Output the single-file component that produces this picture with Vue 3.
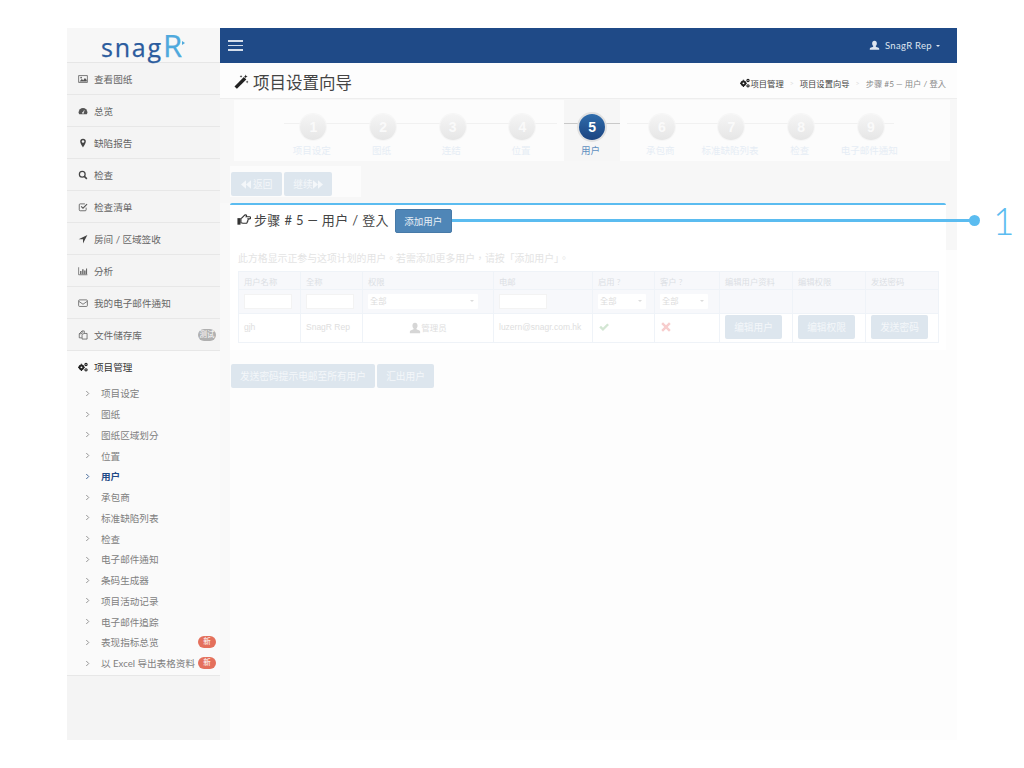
<template>
  <div class="frame">
    <aside class="sidebar">
      <div class="logo">snag<span class="logo-r">R</span><i class="logo-dot"></i></div>
      <a v-for="item in menu" :key="item.label" class="menu-item">
        <svg class="menu-icon" viewBox="0 0 16 16" v-html="item.icon"></svg>
        <span>{{ item.label }}</span>
        <em v-if="item.badge" class="badge grey">{{ item.badge }}</em>
      </a>
      <div class="menu-open">
        <div class="menu-head">
          <svg class="menu-icon" viewBox="0 0 16 16" v-html="cogs"></svg>
          <span>项目管理</span>
        </div>
        <a
          v-for="sub in submenu"
          :key="sub.label"
          class="sub-item"
          :class="{ active: sub.active }"
        >
          <svg class="chevron" viewBox="0 0 6 8"><path d="M1.5 1l3 3-3 3" fill="none" stroke="currentColor" stroke-width="1" /></svg>
          <span class="sub-label">{{ sub.label }}</span>
          <em v-if="sub.isNew" class="badge red">新</em>
        </a>
      </div>
    </aside>

    <main class="main">
      <header class="topbar">
        <div class="burger"><i></i><i></i><i></i></div>
        <div class="user">
          <svg class="user-icon" viewBox="0 0 14 14"><path d="M7 1c1.9 0 3 1.4 3 3.3 0 1.300-.6 2.500-1.300 3.100v1.100c1.700.6 4.300 1.300 4.300 2.600V12.500H1v-1.400c0-1.300 2.600-2 4.300-2.600V7.400C4.600 6.800 4 5.600 4 4.300 4 2.400 5.100 1 7 1z" fill="#dfe6f0" /></svg>
          <span>SnagR Rep</span>
          <i class="caret"></i>
        </div>
      </header>

      <div class="titlebar">
        <h1>
          <svg class="wand" viewBox="0 0 16 16"><path d="M.5 13.200L10.500 3.200l2.600 2.600L3.100 15.800z" fill="#222" /><path d="M12.500 .5l.6 1.500 1.500.6-1.500.6-.6 1.500-.6-1.500-1.500-.6 1.500-.6zM7.500 1l.4 1.100 1.100.4-1.100.4-.4 1.100-.4-1.100-1.100-.4 1.100-.4zM14 7l.4 1.100 1.100.4-1.100.4-.4 1.100-.4-1.100-1.100-.4 1.100-.4z" fill="#222" /></svg>
          项目设置向导
        </h1>
        <div class="crumbs">
          <svg class="crumb-icon" viewBox="0 0 16 16" v-html="cogs"></svg>
          <b>项目管理</b><u>&gt;</u><b>项目设置向导</b><u>&gt;</u><span>步骤 #5 — 用户 / 登入</span>
        </div>
      </div>

      <div class="steps-wrap">
        <div class="steps">
          <div
            v-for="(step, i) in steps"
            :key="step"
            class="step"
            :class="{ current: i === 4 }"
          >
            <div class="circle">{{ i + 1 }}</div>
            <div class="step-label">{{ step }}</div>
          </div>
        </div>
      </div>

      <div class="nav-row">
        <div class="nav-buttons">
          <button class="btn faded back">
            <svg class="arrows" viewBox="0 0 12 10"><path d="M6 0v10L0 5zM12 0v10L6 5z" fill="currentColor" /></svg>
            返回
          </button>
          <button class="btn faded next">
            继续<svg class="arrows" viewBox="0 0 12 10"><path d="M0 0v10l6-5zM6 0v10l6-5z" fill="currentColor" /></svg>
          </button>
        </div>
      </div>

      <section class="card">
        <div class="card-head">
          <h2>
            <svg class="thumb" viewBox="0 0 16 16"><path d="M.5 7h3.500v7.500H.5z" fill="#333" /><path d="M4.500 7.500c1.300-.3 2.500-2 3.600-3.300.8-1 1.700-1.200 2.400-.7.700.5.400 1.300 0 1.900h3.800c.8 0 1.300.6 1.300 1.200s-.5 1.200-1.300 1.200h-1.700c.3.700.2 1.400-.3 1.800.2.700 0 1.400-.6 1.700.1.900-.5 1.600-1.400 1.600H7.500c-1.200 0-2-.6-3-.6z" fill="none" stroke="#333" stroke-width="1.300" /></svg>
            步骤 # 5 — 用户 / 登入
          </h2>
          <button class="btn add">添加用户</button>
        </div>
        <p class="hint">此方格显示正参与这项计划的用户。若需添加更多用户，请按「添加用户」。</p>
        <table class="users">
          <colgroup>
            <col v-for="w in colWidths" :key="w.id" :style="{ width: w.px + 'px' }" />
          </colgroup>
          <thead>
            <tr class="head-row">
              <th v-for="h in headers" :key="h">{{ h }}</th>
            </tr>
            <tr class="filter-row">
              <td><input class="filter" /></td>
              <td><input class="filter" /></td>
              <td><div class="select wide">全部<i></i></div></td>
              <td><input class="filter" /></td>
              <td><div class="select">全部<i></i></div></td>
              <td><div class="select">全部<i></i></div></td>
              <td></td><td></td><td></td>
            </tr>
          </thead>
          <tbody>
            <tr class="data-row">
              <td>gjh</td>
              <td>SnagR Rep</td>
              <td class="role">
                <svg class="role-icon" viewBox="0 0 14 14"><path d="M7 1c1.900 0 3 1.400 3 3.300 0 1.300-.6 2.500-1.300 3.100v1.100c1.700.6 4.300 1.300 4.300 2.600v1.900H1v-1.900c0-1.300 2.600-2 4.300-2.600V7.400C4.600 6.800 4 5.600 4 4.300 4 2.400 5.100 1 7 1z" fill="#d6d6d6" /></svg>管理员
              </td>
              <td>luzern@snagr.com.hk</td>
              <td><svg class="mark" viewBox="0 0 14 14"><path d="M1.500 7.500l2-2 2.300 2.300 5-5 2 2-7 7z" fill="#d3e6d3" /></svg></td>
              <td><svg class="mark" viewBox="0 0 14 14"><path d="M3.500 1.500L7 5l3.500-3.500 2 2L9 7l3.500 3.500-2 2L7 9l-3.500 3.500-2-2L5 7 1.500 3.500z" fill="#f7cdcd" /></svg></td>
              <td><button class="btn faded small">编辑用户</button></td>
              <td><button class="btn faded small">编辑权限</button></td>
              <td><button class="btn faded small">发送密码</button></td>
            </tr>
          </tbody>
        </table>
      </section>

      <div class="bottom-buttons">
        <button class="btn faded remind">发送密码提示电邮至所有用户</button>
        <button class="btn faded export">汇出用户</button>
      </div>
    </main>

    <div class="callout">
      <i class="callout-line"></i>
      <i class="callout-dot"></i>
      <span class="callout-num">1</span>
    </div>
  </div>
</template>

<script setup>
const cogs = '<circle cx="5.500" cy="8.500" r="3" fill="none" stroke="#222" stroke-width="3"/><path d="M5.500 2.800v1.500M5.500 12.700v1.500M.2 8.500h1.500M9.300 8.500h1.500" stroke="#222" stroke-width="2"/><circle cx="12.800" cy="4" r="1.800" fill="none" stroke="#222" stroke-width="1.800"/><circle cx="12.800" cy="12.500" r="1.800" fill="none" stroke="#222" stroke-width="1.800"/>'

const menu = [
  { label: "查看图纸", icon: '<path d="M1 2.500h14v11H1z" fill="none" stroke="#555" stroke-width="1.200"/><path d="M2.500 12l3.500-4 2.500 2 2.500-3.500 3 3V12z" fill="#555"/><circle cx="5" cy="5.800" r="1.300" fill="#555"/>' },
  { label: "总览", icon: '<path d="M8 3a7 7 0 0 0-7 7c0 1.300.3 2.300 1 3h12c.7-.7 1-1.700 1-3a7 7 0 0 0-7-7z" fill="#555"/><path d="M8 11l2-4" stroke="#f5f5f5" stroke-width="1.300"/><circle cx="8" cy="11" r="1.300" fill="#f5f5f5"/>' },
  { label: "缺陷报告", icon: '<path d="M8 1a4.500 4.500 0 0 0-4.500 4.500C3.500 8.500 8 15 8 15s4.500-6.500 4.500-9.500A4.500 4.500 0 0 0 8 1z" fill="#444"/><circle cx="8" cy="5.500" r="2" fill="#f5f5f5"/>' },
  { label: "检查", icon: '<circle cx="6.800" cy="6.800" r="4.600" fill="none" stroke="#444" stroke-width="2"/><path d="M10.200 10.200l4 4" stroke="#444" stroke-width="2.400"/>' },
  { label: "检查清单", icon: '<path d="M13 9v3.500a1.500 1.500 0 0 1-1.500 1.500h-8A1.500 1.500 0 0 1 2 12.500v-8A1.500 1.500 0 0 1 3.500 3H11" fill="none" stroke="#555" stroke-width="1.300"/><path d="M5 7l3 3 6.500-6.500" fill="none" stroke="#555" stroke-width="1.800"/>' },
  { label: "房间 / 区域签收", icon: '<path d="M15 1.500L1 8.500h7v6.500z" fill="#444"/>' },
  { label: "分析", icon: '<path d="M1 2v12h14" fill="none" stroke="#555" stroke-width="1.100"/><path d="M3.500 8h2v5h-2zM6.800 5h2v8h-2zM10 7h2v6h-2zM13 4h1.500v9H13z" fill="#555"/>' },
  { label: "我的电子邮件通知", icon: '<rect x="1" y="3" width="14" height="10.500" rx="1.500" fill="none" stroke="#555" stroke-width="1.200"/><path d="M1.500 5.500L8 10l6.500-4.500" fill="none" stroke="#555" stroke-width="1.200"/>' },
  { label: "文件储存库", badge: "测试", icon: '<path d="M6.500 1.500L2 6v6.500h4M6.500 1.500h3.500v3.500M6.500 1.500v4.500H2" fill="none" stroke="#555" stroke-width="1.200"/><path d="M9 5.500h5.500v9h-8v-6z" fill="none" stroke="#555" stroke-width="1.200"/>' }
]

const submenu = [
  { label: "项目设定" },
  { label: "图纸" },
  { label: "图纸区域划分" },
  { label: "位置" },
  { label: "用户", active: true },
  { label: "承包商" },
  { label: "标准缺陷列表" },
  { label: "检查" },
  { label: "电子邮件通知" },
  { label: "条码生成器" },
  { label: "项目活动记录" },
  { label: "电子邮件追踪" },
  { label: "表现指标总览", isNew: true },
  { label: "以 Excel 导出表格资料", isNew: true }
]

const steps = ["项目设定", "图纸", "连结", "位置", "用户", "承包商", "标准缺陷列表", "检查", "电子邮件通知"]

const headers = ["用户名称", "全称", "权限", "电邮", "启用 ?", "客户 ?", "编辑用户资料", "编辑权限", "发送密码"]

const colWidths = [62, 62, 131, 99, 62, 65, 73, 73, 73].map((px, id) => ({ id, px }))
</script>

<style>
body {
  background: #fff;
}
</style>

<style scoped>
.frame {
  position: relative;
  display: flex;
  width: 890px;
  height: 712px;
  margin: 28px 0 0 67px;
  font-family: Lato, "Noto Sans CJK TC", sans-serif;
  background: #fdfdfd;
}

.sidebar {
  width: 153px;
  flex-shrink: 0;
  background: #f4f4f4;
}

.logo {
  display: flex;
  justify-content: center;
  align-items: baseline;
  height: 35px;
  padding-right: 1px;
  font-family: "Open Sans", sans-serif;
  font-size: 25px;
  line-height: 34px;
  letter-spacing: 1.800px;
  color: #2b5c9e;
  -webkit-text-stroke: 0.25px #2b5c9e;
  background: #f7f7f7;
  border-bottom: 1px solid #e6e6e6;
  box-sizing: border-box;
}
.logo-r {
  color: #4fa9dd;
  -webkit-text-stroke: 0.25px #4fa9dd;
  font-size: 31px;
  line-height: 34px;
  letter-spacing: 0;
}
.logo-dot {
  align-self: center;
  width: 0;
  height: 0;
  margin-top: -4px;
  border-left: 3px solid #4fa9dd;
  border-top: 2px solid transparent;
  border-bottom: 2px solid transparent;
}

.menu-item {
  display: flex;
  align-items: center;
  height: 32px;
  padding: 0 4px 0 11px;
  box-sizing: border-box;
  font-size: 9.6px;
  color: #666;
  background: #f4f4f4;
  border-bottom: 1px solid #e7e7e7;
}
.menu-icon {
  width: 10px;
  height: 10px;
  margin-right: 6px;
  flex-shrink: 0;
}
.badge {
  margin-left: auto;
  width: 18px;
  height: 12px;
  border-radius: 6px;
  font-style: normal;
  font-size: 7.500px;
  line-height: 12px;
  text-align: center;
  color: #fff;
}
.badge.grey {
  background: #b0b0b0;
}
.badge.red {
  background: #e4705c;
}

.menu-open {
  background: #fafafa;
  padding-bottom: 1px;
  border-bottom: 1px solid #e7e7e7;
}
.menu-head {
  display: flex;
  align-items: center;
  height: 32px;
  padding-left: 11px;
  font-size: 9.6px;
  color: #333;
}
.sub-item {
  display: flex;
  align-items: center;
  height: 20.750px;
  padding: 0 4px 0 18px;
  font-size: 9.6px;
  color: #808080;
}
.chevron {
  width: 5px;
  height: 7px;
  margin-right: 11px;
  flex-shrink: 0;
}
.sub-label {
  white-space: nowrap;
}
.sub-item.active {
  color: #1f4a87;
  font-weight: 700;
}

.main {
  flex: 1;
  min-width: 0;
  background:
    linear-gradient(#f7f7f7, #f7f7f7) 100% 0 / 11px 222px no-repeat,
    linear-gradient(#f9f9f9, #f9f9f9) 0 0 / 10px 100% no-repeat,
    #fdfdfd;
}

.topbar {
  display: flex;
  align-items: center;
  justify-content: space-between;
  height: 35px;
  padding: 0 17px 0 8px;
  background: #1f4a87;
}
.burger {
  width: 15px;
}
.burger i {
  display: block;
  height: 1.500px;
  margin: 2.800px 0;
  background: #d5deeb;
}
.user {
  display: flex;
  align-items: center;
  font-size: 9.500px;
  letter-spacing: 0.3px;
  color: #dfe6f0;
}
.user-icon {
  width: 11px;
  height: 11px;
  margin-right: 5px;
}
.caret {
  margin-left: 4px;
  border-top: 2.500px solid #dfe6f0;
  border-left: 2.500px solid transparent;
  border-right: 2.500px solid transparent;
}

.titlebar {
  display: flex;
  align-items: center;
  justify-content: space-between;
  height: 36px;
  padding: 2px 11px 0 14px;
  box-sizing: border-box;
  background: #fdfdfd;
  border-bottom: 1px solid #eeeeee;
}
.titlebar h1 {
  display: flex;
  align-items: center;
  margin: 0;
  font-size: 16.500px;
  font-weight: 400;
  color: #444;
}
.wand {
  width: 15px;
  height: 15px;
  margin-right: 4px;
}
.crumbs {
  display: flex;
  align-items: center;
  padding-top: 2px;
  font-size: 8.300px;
  color: #888;
}
.crumbs b {
  font-weight: 400;
  color: #444;
}
.crumbs u {
  margin: 0 6px;
  font-size: 7px;
  text-decoration: none;
  color: #ddd;
}
.crumb-icon {
  width: 10px;
  height: 10px;
  margin-right: 1px;
}

.steps-wrap {
  padding: 1px 7px 0 14px;
  background: #f7f7f7;
}
.steps {
  display: flex;
  height: 61px;
  padding-left: 44.500px;
  background: #fcfcfc;
}
.step {
  position: relative;
  width: 69.700px;
  padding-top: 14px;
  box-sizing: border-box;
  text-align: center;
}
.step::before {
  content: "";
  position: absolute;
  top: 23px;
  left: 0;
  right: 0;
  height: 1px;
  background: #f1f1f1;
}
.step:first-child::before {
  left: 5px;
}
.step:last-child::before {
  right: 12px;
}
.step.current::after {
  content: "";
  position: absolute;
  z-index: 0;
  top: 0;
  bottom: 0;
  left: 7px;
  right: 7px;
  background: #f6f6f6;
}
.circle {
  position: relative;
  z-index: 1;
  width: 26px;
  height: 26px;
  margin: 0 auto 3px;
  border-radius: 50%;
  font-family: "Liberation Sans", sans-serif;
  font-size: 14px;
  font-weight: 700;
  line-height: 26px;
  color: #fafafa;
  background: linear-gradient(#f5f5f5, #e6e6e6);
  box-shadow: 0 0 0 1px #f6f6f6;
}
.step-label {
  position: relative;
  z-index: 1;
  margin-left: -3px;
  font-size: 9.500px;
  white-space: nowrap;
  color: #e6edf5;
}
.step.current .circle {
  color: #fff;
  background: linear-gradient(#2f6cab, #1c4480);
  box-shadow: 0 0 0 2px #e1e1e1;
}
.step.current .step-label {
  color: #5f8fc0;
}
.step.current::before {
  z-index: 1;
  left: 7px;
  right: 7px;
  background: #c9c9c9;
}

.nav-row {
  height: 42px;
  padding: 5px 0 0 10px;
  box-sizing: border-box;
  background: #f7f7f7;
}
.nav-buttons {
  display: flex;
  gap: 2px;
  width: 131px;
  height: 31px;
  padding: 6px 0 0 1px;
  box-sizing: border-box;
  background: #fcfcfc;
}

.btn {
  font-family: inherit;
  font-size: 9.700px;
  border: 1px solid transparent;
  border-radius: 2px;
  height: 24px;
  padding: 0 9px;
  color: #fff;
}
.faded {
  background: #dde6ee;
  color: #f4f7fa;
}
.back {
  width: 51px;
  padding: 0;
}
.next {
  width: 48px;
  padding: 0;
}
.remind {
  width: 144px;
  padding: 0;
}
.export {
  width: 57px;
  padding: 0;
}
.arrows {
  width: 10px;
  height: 9px;
  vertical-align: -1px;
}

.card {
  margin: 0 11px 0 10px;
  height: 147px;
  padding: 0 7px 0 8px;
  box-sizing: border-box;
  background: #fff;
  border-top: 2px solid #5bbcf0;
  border-radius: 2px 2px 0 0;
}
.card-head {
  display: flex;
  align-items: center;
  height: 32px;
  margin-bottom: 14px;
}
.card-head h2 {
  display: flex;
  align-items: center;
  margin: 0 6px 4px -1px;
  font-size: 13px;
  font-weight: 400;
  letter-spacing: 0.35px;
  color: #444;
}
.thumb {
  width: 14px;
  height: 14px;
  margin-right: 3px;
}
.add {
  width: 57px;
  padding: 0;
  font-size: 9.500px;
  background: #4f86b7;
  border-color: #477aa8;
  color: #e9f0f6;
}
.hint {
  margin: 0 0 6px;
  font-size: 9.900px;
  line-height: 14px;
  color: #e4e4e4;
}

.users {
  width: 700px;
  table-layout: fixed;
  border-collapse: collapse;
  border: 1px solid #e6ebf3;
  font-size: 8.300px;
}
.users th,
.users td {
  box-sizing: border-box;
  padding: 0 5px;
  text-align: left;
  border: 1px solid #eff3f8;
}
.head-row th {
  height: 18px;
  font-weight: 400;
  color: #dcdfe4;
  background: #f7f8fb;
}
.filter-row td {
  height: 24px;
  background: #f7f8fb;
}
.filter {
  display: block;
  width: 48px;
  height: 15px;
  box-sizing: border-box;
  padding: 0;
  background: #fff;
  border: 1px solid #f3f3f3;
}
.select {
  position: relative;
  height: 15px;
  width: 48px;
  padding-left: 2px;
  box-sizing: border-box;
  line-height: 15px;
  color: #dcdcdc;
  background: #fff;
  border-radius: 1px;
}
.select.wide {
  width: 110px;
}
.select i {
  position: absolute;
  top: 6px;
  right: 4px;
  border-top: 2.500px solid #dcdcdc;
  border-left: 2.500px solid transparent;
  border-right: 2.500px solid transparent;
}
.data-row td {
  height: 29px;
  padding-bottom: 2px;
  font-family: "Liberation Sans", sans-serif;
  font-size: 8.500px;
  color: #dedede;
}
.data-row td.role {
  text-align: center;
  font-family: Lato, "Noto Sans CJK TC", sans-serif;
}
.role-icon {
  width: 12px;
  height: 12px;
  vertical-align: -3px;
}
.mark {
  display: block;
  width: 12px;
  height: 12px;
}
.small {
  display: block;
  height: 24px;
  width: 57px;
  padding: 0;
  font-family: Lato, "Noto Sans CJK TC", sans-serif;
}

.bottom-buttons {
  display: flex;
  gap: 2px;
  padding: 14px 0 0 11px;
}

.callout {
  position: absolute;
  left: 385px;
  top: 192px;
  width: 572px;
  height: 1px;
}
.callout-line {
  position: absolute;
  top: -1px;
  left: 0;
  width: 523px;
  height: 3px;
  background: #5bbcf0;
}
.callout-dot {
  position: absolute;
  top: -5px;
  left: 517px;
  width: 11px;
  height: 11px;
  border-radius: 50%;
  background: #5bbcf0;
}
.callout-num {
  position: absolute;
  top: -20px;
  left: 541px;
  font-family: Lato, sans-serif;
  font-size: 37px;
  font-weight: 300;
  line-height: 42px;
  color: #5bbcf0;
}
</style>
